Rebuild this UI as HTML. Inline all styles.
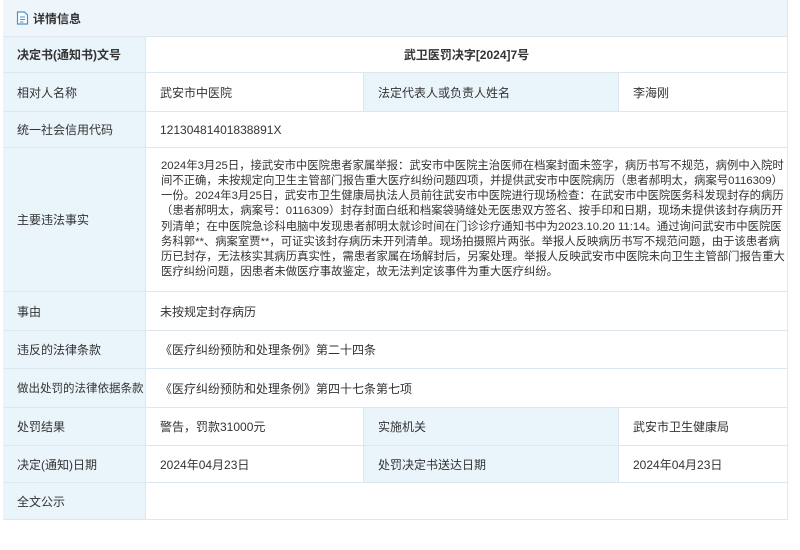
<!DOCTYPE html>
<html><head><meta charset="utf-8"><style>
*{margin:0;padding:0;box-sizing:border-box}
body{width:800px;height:550px;background:#fff;font-family:"Liberation Sans","Noto Sans CJK SC",sans-serif;color:#333;position:relative;overflow:hidden}
.c{position:absolute;border-right:1px solid #dde7ef;border-bottom:1px solid #dde7ef;display:flex;align-items:center;font-size:12px;padding-left:14px;white-space:nowrap}
.l{background:#eaf4fb}
.v{background:#fff}
</style></head><body>
<div style="position:absolute;left:3px;top:0;width:785px;height:520px;border-left:1px solid #dde7ef;border-right:1px solid #dde7ef"></div>
<div class="c" style="left:3px;top:0;width:785px;height:37px;background:#eef6fc;font-weight:bold;padding-left:13px">
<svg width="13" height="14" viewBox="0 0 13 14" style="margin-right:4px"><path d="M1.5 1h7l3 3v9h-10z" fill="#fff" stroke="#4a90c8" stroke-width="1.2"/><path d="M4 6h5M4 8.5h5M4 11h3.5" stroke="#4a90c8" stroke-width="1"/></svg>详情信息</div>

<div class="c l" style="left:3px;top:37px;width:143px;height:36px;font-weight:bold">决定书(通知书)文号</div>
<div class="c v" style="left:146px;top:37px;width:642px;height:36px;justify-content:center;font-weight:bold;padding-left:0">武卫医罚决字[2024]7号</div>

<div class="c l" style="left:3px;top:73px;width:143px;height:39px">相对人名称</div>
<div class="c v" style="left:146px;top:73px;width:218px;height:39px">武安市中医院</div>
<div class="c l" style="left:364px;top:73px;width:255px;height:39px">法定代表人或负责人姓名</div>
<div class="c v" style="left:619px;top:73px;width:169px;height:39px">李海刚</div>

<div class="c l" style="left:3px;top:112px;width:143px;height:36px">统一社会信用代码</div>
<div class="c v" style="left:146px;top:112px;width:642px;height:36px">12130481401838891X</div>

<div class="c l" style="left:3px;top:148px;width:143px;height:144px">主要违法事实</div>
<div class="c v" style="left:146px;top:148px;width:642px;height:144px;font-size:11.35px;line-height:15.2px;padding:0 0 0 15px;overflow:hidden"><div>2024年3月25日，接武安市中医院患者家属举报：武安市中医院主治医师在档案封面未签字，病历书写不规范，病例中入院时<br>间不正确，未按规定向卫生主管部门报告重大医疗纠纷问题四项，并提供武安市中医院病历（患者郝明太，病案号0116309）<br>一份。2024年3月25日，武安市卫生健康局执法人员前往武安市中医院进行现场检查：在武安市中医院医务科发现封存的病历<br>（患者郝明太，病案号：0116309）封存封面白纸和档案袋骑缝处无医患双方签名、按手印和日期，现场未提供该封存病历开<br>列清单；在中医院急诊科电脑中发现患者郝明太就诊时间在门诊诊疗通知书中为2023.10.20 11:14。通过询问武安市中医院医<br>务科郭**、病案室贾**，可证实该封存病历未开列清单。现场拍摄照片两张。举报人反映病历书写不规范问题，由于该患者病<br>历已封存，无法核实其病历真实性，需患者家属在场解封后，另案处理。举报人反映武安市中医院未向卫生主管部门报告重大<br>医疗纠纷问题，因患者未做医疗事故鉴定，故无法判定该事件为重大医疗纠纷。</div></div>

<div class="c l" style="left:3px;top:292px;width:143px;height:39px">事由</div>
<div class="c v" style="left:146px;top:292px;width:642px;height:39px">未按规定封存病历</div>

<div class="c l" style="left:3px;top:331px;width:143px;height:38px">违反的法律条款</div>
<div class="c v" style="left:146px;top:331px;width:642px;height:38px">《医疗纠纷预防和处理条例》第二十四条</div>

<div class="c l" style="left:3px;top:369px;width:143px;height:39px;padding-left:14px;font-size:11.5px">做出处罚的法律依据条款</div>
<div class="c v" style="left:146px;top:369px;width:642px;height:39px">《医疗纠纷预防和处理条例》第四十七条第七项</div>

<div class="c l" style="left:3px;top:408px;width:143px;height:38px">处罚结果</div>
<div class="c v" style="left:146px;top:408px;width:218px;height:38px">警告，罚款31000元</div>
<div class="c l" style="left:364px;top:408px;width:255px;height:38px">实施机关</div>
<div class="c v" style="left:619px;top:408px;width:169px;height:38px">武安市卫生健康局</div>

<div class="c l" style="left:3px;top:446px;width:143px;height:37px">决定(通知)日期</div>
<div class="c v" style="left:146px;top:446px;width:218px;height:37px">2024年04月23日</div>
<div class="c l" style="left:364px;top:446px;width:255px;height:37px">处罚决定书送达日期</div>
<div class="c v" style="left:619px;top:446px;width:169px;height:37px">2024年04月23日</div>

<div class="c l" style="left:3px;top:483px;width:143px;height:37px">全文公示</div>
<div class="c v" style="left:146px;top:483px;width:642px;height:37px"></div>
</body></html>
